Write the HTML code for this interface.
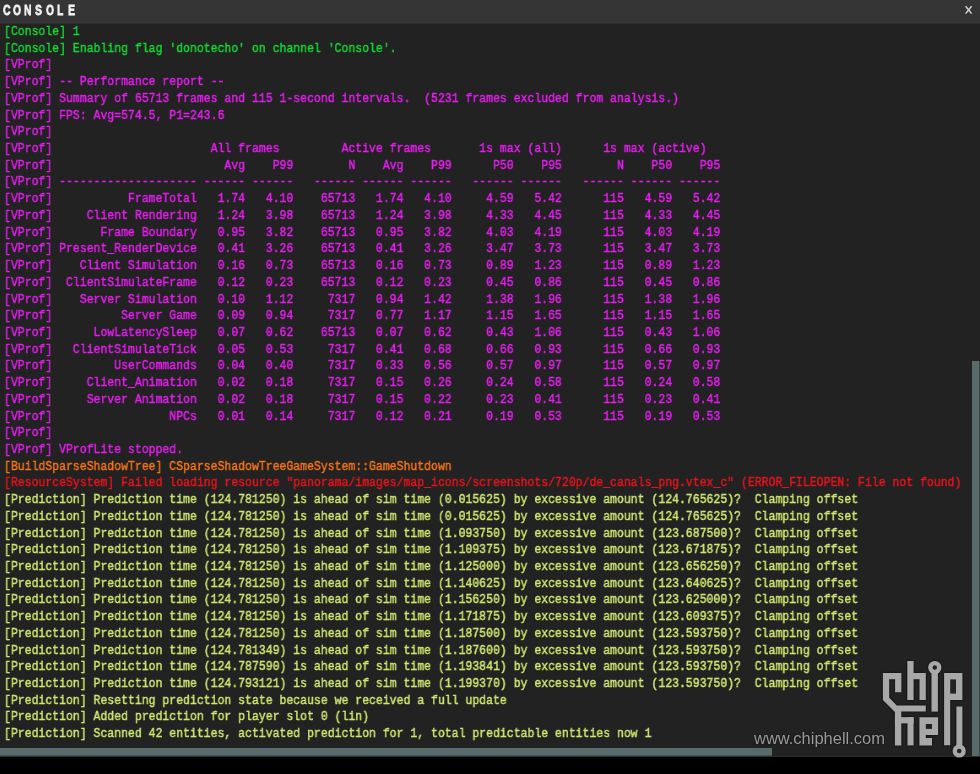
<!DOCTYPE html>
<html><head><meta charset="utf-8"><style>
html,body{margin:0;padding:0;}
body{width:980px;height:774px;overflow:hidden;background:#000;position:relative;}
#hdr{position:absolute;left:0;top:0;width:980px;height:23px;background:#353535;}
.tl{will-change:transform;position:absolute;top:1.8px;-webkit-text-stroke:0.8px #f4f4f4;font-family:"Liberation Sans",sans-serif;font-weight:bold;font-size:15.2px;line-height:1;color:#f2f2f2;letter-spacing:0px;transform:scaleX(0.68);transform-origin:0 0;white-space:nowrap;}
#close{position:absolute;left:955px;top:0;}
#con{position:absolute;left:0;top:24px;width:980px;height:732px;border-top:0;background:#222222;overflow:hidden;}
#txt{will-change:transform;position:absolute;left:4px;top:24.3px;font-family:"Liberation Mono",monospace;font-size:13.6px;line-height:16.73px;transform:scaleX(0.8443);transform-origin:0 0;font-weight:normal;text-shadow:none;-webkit-text-stroke:0.45px currentColor;}
#txt div{white-space:pre;height:16.73px;}
.g{color:#14d832;} .m{color:#e61ef0;} .o{color:#f8741a;} .r{color:#e8141c;} .y{color:#cde86f;}
#vs{position:absolute;left:972px;top:361px;width:7px;height:396px;background:#586a6a;}
#vsr{position:absolute;left:979px;top:361px;width:1px;height:396px;background:#3b4848;}
#hs{position:absolute;left:0;top:748px;width:772px;height:7px;background:#586a6a;}
#hs2{position:absolute;left:0;top:755px;width:772px;height:1px;background:#445454;}
#bline{position:absolute;left:0;top:756px;width:980px;height:1px;background:#2c2c2c;}
#wm{position:absolute;left:0;top:0;}
#hrow{position:absolute;left:0;top:23px;width:980px;height:1px;background:#2d2d2d;}
#wm g.lg{filter:drop-shadow(0 0 1.2px rgba(0,0,0,0.8));}
#url{text-shadow:0 0 2px rgba(0,0,0,0.8);position:absolute;left:754px;top:730.6px;font-family:"Liberation Sans",sans-serif;font-size:16px;line-height:1;color:#9a9a9a;white-space:nowrap;transform:scaleX(1.03);transform-origin:0 0;}
</style></head><body>
<div id="hdr"><span class="tl" style="left:2.6px">C</span><span class="tl" style="left:13.2px">O</span><span class="tl" style="left:23.9px">N</span><span class="tl" style="left:35.3px">S</span><span class="tl" style="left:45.8px">O</span><span class="tl" style="left:57.3px">L</span><span class="tl" style="left:67.9px">E</span><svg id="close" width="20" height="24" viewBox="955 0 20 24"><path d="M965.6,6.2 L971.6,13.6 M971.6,6.2 L965.6,13.6" stroke="#d2d2d2" stroke-width="1.5" stroke-linecap="butt" fill="none"/></svg></div>
<div id="con"></div><div id="hrow"></div>
<div id="txt">
<div class="g">[Console] 1</div>
<div class="g">[Console] Enabling flag 'donotecho' on channel 'Console'.</div>
<div class="m">[VProf]</div>
<div class="m">[VProf] -- Performance report --</div>
<div class="m">[VProf] Summary of 65713 frames and 115 1-second intervals.  (5231 frames excluded from analysis.)</div>
<div class="m">[VProf] FPS: Avg=574.5, P1=243.6</div>
<div class="m">[VProf]</div>
<div class="m">[VProf]                       All frames         Active frames       1s max (all)      1s max (active)</div>
<div class="m">[VProf]                         Avg    P99        N    Avg    P99      P50    P95        N    P50    P95</div>
<div class="m">[VProf] -------------------- ------ ------   ------ ------ ------   ------ ------   ------ ------ ------</div>
<div class="m">[VProf]           FrameTotal   1.74   4.10    65713   1.74   4.10     4.59   5.42      115   4.59   5.42</div>
<div class="m">[VProf]     Client Rendering   1.24   3.98    65713   1.24   3.98     4.33   4.45      115   4.33   4.45</div>
<div class="m">[VProf]       Frame Boundary   0.95   3.82    65713   0.95   3.82     4.03   4.19      115   4.03   4.19</div>
<div class="m">[VProf] Present_RenderDevice   0.41   3.26    65713   0.41   3.26     3.47   3.73      115   3.47   3.73</div>
<div class="m">[VProf]    Client Simulation   0.16   0.73    65713   0.16   0.73     0.89   1.23      115   0.89   1.23</div>
<div class="m">[VProf]  ClientSimulateFrame   0.12   0.23    65713   0.12   0.23     0.45   0.86      115   0.45   0.86</div>
<div class="m">[VProf]    Server Simulation   0.10   1.12     7317   0.94   1.42     1.38   1.96      115   1.38   1.96</div>
<div class="m">[VProf]          Server Game   0.09   0.94     7317   0.77   1.17     1.15   1.65      115   1.15   1.65</div>
<div class="m">[VProf]      LowLatencySleep   0.07   0.62    65713   0.07   0.62     0.43   1.06      115   0.43   1.06</div>
<div class="m">[VProf]   ClientSimulateTick   0.05   0.53     7317   0.41   0.68     0.66   0.93      115   0.66   0.93</div>
<div class="m">[VProf]         UserCommands   0.04   0.40     7317   0.33   0.56     0.57   0.97      115   0.57   0.97</div>
<div class="m">[VProf]     Client_Animation   0.02   0.18     7317   0.15   0.26     0.24   0.58      115   0.24   0.58</div>
<div class="m">[VProf]     Server Animation   0.02   0.18     7317   0.15   0.22     0.23   0.41      115   0.23   0.41</div>
<div class="m">[VProf]                 NPCs   0.01   0.14     7317   0.12   0.21     0.19   0.53      115   0.19   0.53</div>
<div class="m">[VProf]</div>
<div class="m">[VProf] VProfLite stopped.</div>
<div class="o">[BuildSparseShadowTree] CSparseShadowTreeGameSystem::GameShutdown</div>
<div class="r">[ResourceSystem] Failed loading resource "panorama/images/map_icons/screenshots/720p/de_canals_png.vtex_c" (ERROR_FILEOPEN: File not found)</div>
<div class="y">[Prediction] Prediction time (124.781250) is ahead of sim time (0.015625) by excessive amount (124.765625)?  Clamping offset</div>
<div class="y">[Prediction] Prediction time (124.781250) is ahead of sim time (0.015625) by excessive amount (124.765625)?  Clamping offset</div>
<div class="y">[Prediction] Prediction time (124.781250) is ahead of sim time (1.093750) by excessive amount (123.687500)?  Clamping offset</div>
<div class="y">[Prediction] Prediction time (124.781250) is ahead of sim time (1.109375) by excessive amount (123.671875)?  Clamping offset</div>
<div class="y">[Prediction] Prediction time (124.781250) is ahead of sim time (1.125000) by excessive amount (123.656250)?  Clamping offset</div>
<div class="y">[Prediction] Prediction time (124.781250) is ahead of sim time (1.140625) by excessive amount (123.640625)?  Clamping offset</div>
<div class="y">[Prediction] Prediction time (124.781250) is ahead of sim time (1.156250) by excessive amount (123.625000)?  Clamping offset</div>
<div class="y">[Prediction] Prediction time (124.781250) is ahead of sim time (1.171875) by excessive amount (123.609375)?  Clamping offset</div>
<div class="y">[Prediction] Prediction time (124.781250) is ahead of sim time (1.187500) by excessive amount (123.593750)?  Clamping offset</div>
<div class="y">[Prediction] Prediction time (124.781349) is ahead of sim time (1.187600) by excessive amount (123.593750)?  Clamping offset</div>
<div class="y">[Prediction] Prediction time (124.787590) is ahead of sim time (1.193841) by excessive amount (123.593750)?  Clamping offset</div>
<div class="y">[Prediction] Prediction time (124.793121) is ahead of sim time (1.199370) by excessive amount (123.593750)?  Clamping offset</div>
<div class="y">[Prediction] Resetting prediction state because we received a full update</div>
<div class="y">[Prediction] Added prediction for player slot 0 (lin)</div>
<div class="y">[Prediction] Scanned 42 entities, activated prediction for 1, total predictable entities now 1</div>
</div>
<div id="vs"></div><div id="vsr"></div>
<div id="hs"></div><div id="hs2"></div><div id="bline"></div>
<div id="url">www.chiphell.com</div>
<svg id="wm" width="980" height="774" viewBox="0 0 980 774"><g class='lg'><g fill='#a8a8a8'><polygon points='882.9,673 901.4,673 901.4,692.2 895.1,692.2 895.1,679.3 889.2,679.3 889.2,697.8 896.8,705.5 925.8,705.5 925.8,711.4 901.3,711.4 901.3,745.4 894.9,745.4 894.9,711.9 882.9,699.9'/><polygon points='907.3,661.1 913.6,661.1 913.6,673 925.8,673 925.8,699.9 919.5,699.9 919.5,679.3 913.6,679.3 913.6,699.9 907.3,699.9'/><circle cx='934.8' cy='667.5' r='6.6'/><rect x='931.5' y='667.5' width='6.4' height='44.1'/><polygon points='944.1,672.9 962.4,672.9 962.4,700 950.2,700 950.2,745.2 944.1,745.2'/><rect x='894.9' y='717.2' width='18.7' height='6.2'/><rect x='907.5' y='717.2' width='6.1' height='28.2'/><polygon points='919.4,717.2 938.1,717.2 938.1,735 925.8,735 925.8,738 932,738 932,745.4 919.4,745.4'/><rect x='956.4' y='706.5' width='6' height='44.5'/><circle cx='959.2' cy='751' r='6.6'/></g><g fill='#222'><circle cx='934.8' cy='667.5' r='2.2'/><rect x='950.2' y='679.4' width='5.8' height='14.2'/><rect x='925.8' y='724' width='6.2' height='4.9'/><circle cx='959.2' cy='751' r='2.3'/></g></g></svg>
</body></html>
